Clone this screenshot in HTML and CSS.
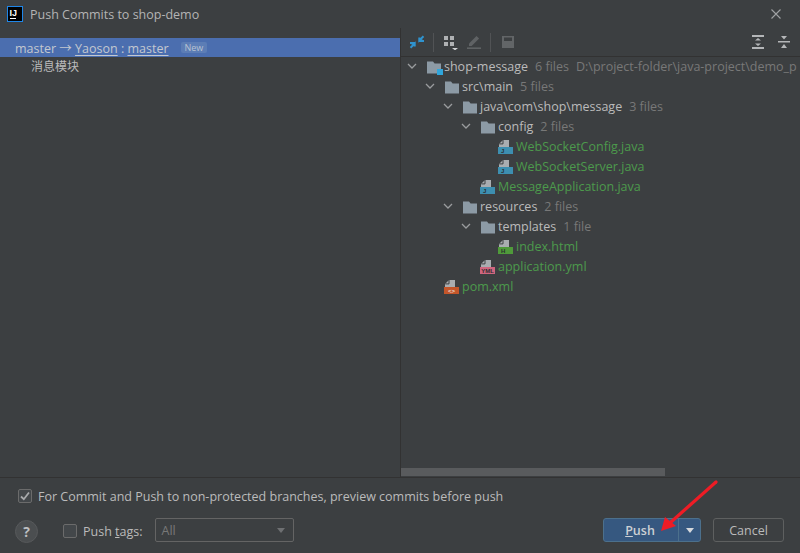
FILE: index.html
```html
<!DOCTYPE html>
<html lang="en">
<head>
<meta charset="utf-8">
<title>Push Commits to shop-demo</title>
<link rel="stylesheet" href="styles.css">
</head>
<body>
<svg class="defs" width="0" height="0" aria-hidden="true">
  <defs>
    <symbol id="folder" viewBox="0 0 16 16"><path d="M1 2.500h6l1.600 2H15v10H1z" fill="#8c9aa5"/></symbol>
    <symbol id="chev" viewBox="0 0 12 12"><path d="M2 3l4 4 4-4" fill="none" stroke="#9a9c9e" stroke-width="1.300"/></symbol>
    <symbol id="doc" viewBox="0 0 16 16"><path d="M5 1h6v7H1V5z" fill="#a9adb0"/><path d="M5 1v3.900H1.300" fill="none" stroke="#3c3f41" stroke-width="1"/></symbol>
  </defs>
</svg>
<div class="app">
  <header class="titlebar">
    <svg class="logo" width="16" height="16" viewBox="0 0 16 16"><rect x=".5" y=".5" width="15" height="15" fill="#000" stroke="#1f86e8"/><text x="2.500" y="9.500" class="logo-t">IJ</text><rect x="3" y="12" width="6" height="1" fill="#fff"/></svg>
    <span class="title">Push Commits to shop-demo</span>
    <svg class="close" width="12" height="12" viewBox="0 0 12 12"><path d="M1.500 1.500l9 9M10.500 1.500l-9 9" stroke="#a0a2a4" stroke-width="1.100"/></svg>
  </header>
  <main class="main">
    <section class="commits">
      <div class="branch">
        <span class="branch-text">master → <u>Yaoson</u> : <u>master</u></span><span class="badge">New</span>
      </div>
      <div class="commit">消息模块</div>
    </section>
    <section class="changes">
      <div class="toolbar">
        <svg class="tool" width="16" height="16" viewBox="0 0 16 16"><path d="M14.500 2.200L10.300 6.400V3.400M10.300 6.400h3.400M9.500 6.900h5.500" fill="none" stroke="#2f93cf" stroke-width="2"/><path d="M1.500 13.800l4.200-4.200v3M5.700 9.600H2.300M6.500 9.100H1" fill="none" stroke="#2f93cf" stroke-width="2"/></svg>
        <i class="sep"></i>
        <svg class="tool" width="16" height="16" viewBox="0 0 16 16"><path d="M2 2h4v4H2zM8 2h4v4H8zM2 8h4v4H2zM8 8h4v4H8z" fill="#afb1b3"/><path d="M10 14h6l-3 2.400z" fill="#d0d2d4"/></svg>
        <svg class="tool tool-gap" width="16" height="16" viewBox="0 0 16 16"><path d="M3 9.500L10.500 2l2.600 2.600-7.500 7.500H3z" fill="#5f6264"/><rect x="1" y="13.400" width="14" height="1.600" fill="#5f6264"/></svg>
        <i class="sep sep-b"></i>
        <svg class="tool" width="16" height="16" viewBox="0 0 16 16"><path d="M2 2h12v12H2z" fill="#626567"/><rect x="4" y="3.500" width="8" height="3.500" fill="#3c3f41"/></svg>
        <span class="spacer"></span>
        <svg class="tool" width="16" height="16" viewBox="0 0 16 16"><path d="M2 1h12v2H2zM2 13h12v2H2zM8 4l3 2.600H5zM8 12l-3-2.600h6z" fill="#b4b6b8"/></svg>
        <svg class="tool tool-last" width="16" height="16" viewBox="0 0 16 16"><path d="M2 7h12v1.500H2zM5 2h6l-3 3.500zM8 10l3 4H5z" fill="#b4b6b8"/></svg>
      </div>
      <div class="tree">
        <div class="row l0"><svg class="chev"><use href="#chev"/></svg><span class="ico"><svg width="16" height="16"><use href="#folder"/></svg><b class="module"></b></span><span class="name">shop-message</span><span class="meta">6 files</span><span class="meta path">D:\project-folder\java-project\demo_p</span></div>
        <div class="row l1"><svg class="chev"><use href="#chev"/></svg><svg class="ico" width="16" height="16"><use href="#folder"/></svg><span class="name">src\main</span><span class="meta">5 files</span></div>
        <div class="row l2"><svg class="chev"><use href="#chev"/></svg><svg class="ico" width="16" height="16"><use href="#folder"/></svg><span class="name">java\com\shop\message</span><span class="meta">3 files</span></div>
        <div class="row l3"><svg class="chev"><use href="#chev"/></svg><svg class="ico" width="16" height="16"><use href="#folder"/></svg><span class="name">config</span><span class="meta">2 files</span></div>
        <div class="row l4"><span class="chev"></span><svg class="ico" width="16" height="16"><use href="#doc"/><rect y="8" width="15" height="7" fill="#3d8fb0"/><text x="3" y="14" class="tag tag-d">J</text></svg><span class="name new">WebSocketConfig.java</span></div>
        <div class="row l4"><span class="chev"></span><svg class="ico" width="16" height="16"><use href="#doc"/><rect y="8" width="15" height="7" fill="#3d8fb0"/><text x="3" y="14" class="tag tag-d">J</text></svg><span class="name new">WebSocketServer.java</span></div>
        <div class="row l3"><span class="chev"></span><svg class="ico" width="16" height="16"><use href="#doc"/><rect y="8" width="15" height="7" fill="#3d8fb0"/><text x="3" y="14" class="tag tag-d">J</text></svg><span class="name new">MessageApplication.java</span></div>
        <div class="row l2"><svg class="chev"><use href="#chev"/></svg><svg class="ico" width="16" height="16"><use href="#folder"/></svg><span class="name">resources</span><span class="meta">2 files</span></div>
        <div class="row l3"><svg class="chev"><use href="#chev"/></svg><svg class="ico" width="16" height="16"><use href="#folder"/></svg><span class="name">templates</span><span class="meta">1 file</span></div>
        <div class="row l4"><span class="chev"></span><svg class="ico" width="16" height="16"><use href="#doc"/><rect y="8" width="15" height="7" fill="#4f9a3a"/><text x="3" y="14" class="tag tag-d">H</text></svg><span class="name new">index.html</span></div>
        <div class="row l3"><span class="chev"></span><svg class="ico" width="16" height="16"><use href="#doc"/><rect y="8" width="15" height="7" fill="#d0667f"/><text x="7.500" y="14" class="tag tag-m">YML</text></svg><span class="name new">application.yml</span></div>
        <div class="row l1"><span class="chev"></span><svg class="ico" width="16" height="16"><use href="#doc"/><rect y="8" width="15" height="7" fill="#c4562a"/><text x="7.500" y="14" class="tag tag-m tag-x">&lt;&gt;</text></svg><span class="name new">pom.xml</span></div>
      </div>
      <div class="hscroll"><div class="thumb"></div></div>
    </section>
  </main>
  <footer class="footer">
    <label class="preview"><span class="check checked"><svg width="10" height="10" viewBox="0 0 10 10"><path d="M1 5.500l2.800 2.700L9 1.500" fill="none" stroke="#a8aaac" stroke-width="1.800"/></svg></span><span class="preview-text">For Commit and Push to non-protected branches, preview commits before push</span></label>
    <div class="actions">
      <span class="help">?</span>
      <label class="tags"><span class="check"></span><span class="tags-text">Push <u>t</u>ags:</span></label>
      <div class="combo"><span class="combo-text">All</span><i class="caret"></i></div>
      <span class="spacer"></span>
      <div class="push"><span class="push-main"><u>P</u>ush</span><span class="push-drop"><i class="caret caret-w"></i></span></div>
      <span class="cancel">Cancel</span>
    </div>
  </footer>
  <svg class="annot" width="70" height="70" viewBox="0 0 70 70"><path d="M65 3L20 43" stroke="#ee1c25" stroke-width="3.200" stroke-linecap="round"/><path d="M10 52l4-14 11 9z" fill="#ee1c25"/></svg>
</div>
</body>
</html>
```
FILE: styles.css
```css
* { box-sizing: border-box; }
html, body { margin: 0; height: 100%; }
body { background: #3c3f41; color: #bbbbbb; font: 12.500px/20px "Open Sans", "Noto Sans CJK SC", sans-serif; overflow: hidden; }
.defs { position: absolute; }
.app { position: relative; width: 800px; height: 553px; display: flex; flex-direction: column; }
.titlebar { height: 28px; flex: none; display: flex; align-items: center; padding: 0 18px 0 7px; }
.logo { flex: none; }
.logo-t { font: bold 9px "Liberation Sans", sans-serif; fill: #fff; }
.title { margin: 2px 0 0 7px; flex: 1; color: #b4b4b4; }
.main { flex: 1; min-height: 0; display: flex; border-bottom: 1px solid #323232; }
.commits { width: 401px; flex: none; padding-top: 10px; border-right: 1px solid #323232; }
.branch { height: 19px; line-height: 19px; padding-left: 15px; background: #4b6eaf; display: flex; align-items: center; color: #c3c8d0; white-space: nowrap; }
.branch-text { margin-top: 1px; }
.branch u { text-underline-offset: 2px; }
.badge { margin-left: 12px; padding: 0 4px; height: 11px; line-height: 11px; font-size: 9px; background: #5c7db5; border-radius: 2px; color: #b8c2d2; }
.commit { padding: 1px 0 0 31px; height: 20px; line-height: 18px; font-size: 12px; }
.changes { flex: 1; min-width: 0; display: flex; flex-direction: column; }
.toolbar { height: 29px; flex: none; display: flex; align-items: center; padding-left: 8px; border-bottom: 1px solid #323232; }
.tool { flex: none; }
.sep { width: 1px; height: 19px; background: #515355; margin: 0 8px; }
.sep-b { margin: 0 9px 0 8px; }
.tool-gap { margin-left: 8px; }
.tool-last { margin: 0 8px 0 10px; }
.spacer { flex: 1; }
.tree { flex: 1; min-height: 0; overflow: hidden; }
.row { height: 20px; display: flex; align-items: center; white-space: nowrap; }
.l0 { padding-left: 5px; }
.l1 { padding-left: 23px; }
.l2 { padding-left: 41px; }
.l3 { padding-left: 59px; }
.l4 { padding-left: 77px; }
.chev { width: 12px; height: 12px; margin-right: 8px; flex: none; display: block; }
.ico { width: 16px; height: 16px; flex: none; margin-right: 2px; position: relative; display: block; }
.module { position: absolute; right: -1px; bottom: 0; width: 6px; height: 6px; background: #2fa6dc; }
.name { color: #bbbbbb; }
.new { color: #4c9a4c; }
.meta { margin-left: 7px; color: #787878; }
.path { min-width: 0; overflow: hidden; }
.tag { fill: #2b2d2f; font-family: "Liberation Sans", sans-serif; }
.tag-d { font-size: 6px; font-weight: bold; }
.tag-m { font-size: 6px; font-weight: bold; text-anchor: middle; }
.tag-x { fill: #e8d8d0; }
.hscroll { height: 9px; flex: none; }
.thumb { width: 264px; height: 8px; background: #595b5d; }
.footer { height: 75px; flex: none; padding: 8px 16px 0 18px; }
.preview { display: flex; align-items: center; height: 20px; }
.preview-text { margin-top: 2px; }
.check { width: 14px; height: 14px; flex: none; border: 1px solid #6b6b6b; border-radius: 2px; background: #43474a; margin-right: 6px; display: flex; align-items: center; justify-content: center; }
.actions { display: flex; align-items: center; height: 24px; margin-top: 12px; margin-left: -3px; }
.help { width: 23px; height: 23px; flex: none; border-radius: 50%; background: #4b4e50; border: 1px solid #57595b; font-weight: bold; font-size: 14px; line-height: 21px; text-align: center; color: #bdbfc1; margin-top: 2px; }
.tags { display: flex; align-items: center; margin-left: 25px; }
.tags .check { margin: 2px 6px 0 0; }
.tags-text { margin-top: 4px; }
.combo { width: 139px; height: 24px; margin-left: 12px; padding: 0 8px 0 6px; border: 1px solid #646464; border-radius: 2px; display: flex; align-items: center; justify-content: space-between; color: #787878; }
.combo-text { margin-top: 2px; }
.caret { display: block; width: 0; height: 0; border: 4.500px solid transparent; border-top: 5px solid #6e7072; border-bottom: 0; }
.caret-w { border-top-color: #d5d8dc; }
.push { width: 98px; height: 24px; display: flex; background: #365880; border: 1px solid #4c708c; border-radius: 3px; color: #ccd0d4; font-weight: 600; }
.push-main { flex: 1; padding-right: 2px; text-align: center; line-height: 24px; }
.push-drop { width: 22px; border-left: 1px solid #4c708c; display: flex; align-items: center; justify-content: center; }
.cancel { width: 71px; height: 24px; margin-left: 12px; border: 1px solid #5e6060; border-radius: 3px; background: #3c3f41; text-align: center; line-height: 24px; }
.annot { position: absolute; left: 651px; top: 479px; pointer-events: none; }
```
